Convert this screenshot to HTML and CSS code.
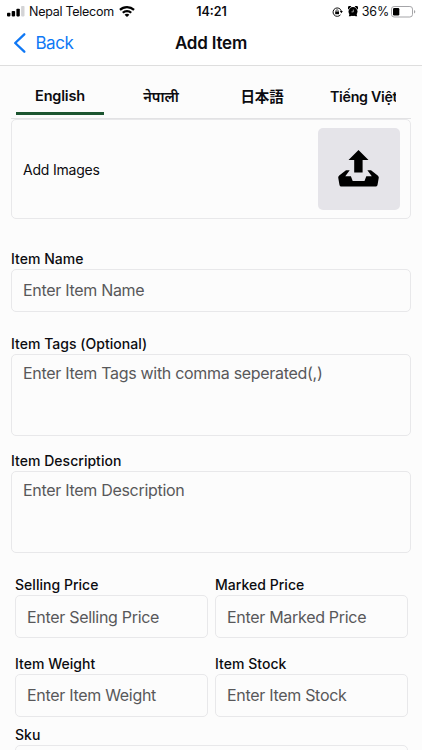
FILE: index.html
```html
<!DOCTYPE html>
<html lang="en">
<head>
<meta charset="utf-8">
<title>Add Item</title>
<link rel="stylesheet" href="styles.css">
</head>
<body>
<div class="screen">
  <header>
    <div class="status">
      <div class="status-left">
        <svg class="signal" width="18" height="11" viewBox="0 0 18 11"><rect x="0" y="6.8" width="3.4" height="3.6" rx=".8"/><rect x="4.7" y="5" width="3.4" height="5.4" rx=".8"/><rect x="9.4" y="2.7" width="3.4" height="7.7" rx=".8"/><rect x="14.1" y="0" width="3.4" height="10.4" rx=".8" fill="#d4d4d6"/></svg>
        <span class="carrier">Nepal Telecom</span>
        <svg class="wifi" width="16" height="12" viewBox="0 0 16 12"><path d="M8 0C4.9 0 2.2 1.2.2 3.1l1.5 1.6a9.1 9.1 0 0 1 12.6 0l1.5-1.6A11.3 11.3 0 0 0 8 0zM8 4a7.2 7.2 0 0 0-5 2l1.6 1.6a4.9 4.9 0 0 1 6.8 0L13 6a7.2 7.2 0 0 0-5-2zM8 7.8c-.9 0-1.8.3-2.4.9L8 11.1l2.4-2.4A3.5 3.5 0 0 0 8 7.8z"/></svg>
      </div>
      <span class="clock">14:21</span>
      <div class="status-right">
        <svg class="lock" width="11" height="10" viewBox="0 0 11 10"><path d="M9.300 4A4.200 4.200 0 1 0 8.500 7.800" fill="none" stroke="#111" stroke-width="1"/><path d="M7.800 4h3L9.400 6.200z"/><path d="M3.200 4.500h3.800v2.700H3.200z"/><path d="M4 4.700V3.800a1.100 1.100 0 0 1 2.200 0v.9" fill="none" stroke="#111" stroke-width=".7"/></svg>
        <svg class="alarm" width="10" height="11" viewBox="0 0 10 11"><circle cx="5" cy="5.600" r="4.500"/><path d="M.3 3.500A2 2 0 0 1 3.300.5zM9.700 3.500A2 2 0 0 0 6.700.5zM1.500 8 .8 10.300h1.700l1.500-1zM8.500 8l.7 2.300H7.500l-1.500-1z"/><path d="M5.300 3.600v2.300H3.500" fill="none" stroke="#ddd" stroke-width=".7"/></svg>
        <span class="percent">36%</span>
        <svg class="battery" width="25" height="12" viewBox="0 0 25 12"><rect x=".5" y=".5" width="21" height="10.500" rx="2.600" fill="none" stroke="#a5a5a8"/><rect x="2" y="2" width="6.300" height="7.500" rx="1.200"/><path d="M23 4v3.500c1.800-.6 1.800-2.900 0-3.500z" fill="#a5a5a8"/></svg>
      </div>
    </div>
    <nav class="nav">
      <div class="back"><svg width="13" height="20" viewBox="0 0 13 20"><path d="M11.300 1.300 2.200 10l9.100 8.700" fill="none" stroke="#0f78f5" stroke-width="2.300" stroke-linecap="round" stroke-linejoin="round"/></svg><span>Back</span></div>
      <h1>Add Item</h1>
    </nav>
  </header>
  <main>
    <div class="tabs">
      <div class="tab active">English</div>
      <div class="tab native" lang="ne">नेपाली</div>
      <div class="tab native" lang="ja">日本語</div>
      <div class="tab native last" lang="vi">Tiếng Việt</div>
    </div>
    <section class="images">
      <span>Add Images</span>
      <div class="upload"><svg width="42" height="38" viewBox="0 0 42 38"><path d="M20.500 0 10.500 10h5.700v12.500h8.400V10h5.900z"/><path d="M8 20.300h3.700L7.300 26.300h5.600l1.800 4.700h11.800l1.800-4.700h5.500l-4.400-6H33l6.700 5.100c.7.500 1 1.300 1.100 2.200l-1.200 6.800c-.2 1.400-1 2-2.200 2H3.500c-1.200 0-1.900-.6-2.100-2L.2 27.600c0-.9.300-1.700 1-2.200z"/></svg></div>
    </section>
    <div class="field name"><label>Item Name</label><div class="input"><span>Enter Item Name</span></div></div>
    <div class="field tags"><label>Item Tags (Optional)</label><div class="input area"><span>Enter Item Tags with comma seperated(,)</span></div></div>
    <div class="field description"><label>Item Description</label><div class="input area"><span>Enter Item Description</span></div></div>
    <div class="pairs">
      <div class="field"><label>Selling Price</label><div class="input"><span>Enter Selling Price</span></div></div>
      <div class="field"><label>Marked Price</label><div class="input"><span>Enter Marked Price</span></div></div>
      <div class="field"><label>Item Weight</label><div class="input"><span>Enter Item Weight</span></div></div>
      <div class="field"><label>Item Stock</label><div class="input"><span>Enter Item Stock</span></div></div>
    </div>
    <div class="field sku"><label>Sku</label><div class="input"></div></div>
  </main>
</div>
</body>
</html>
```
FILE: styles.css
```css
* { box-sizing: border-box; }
body { margin: 0; font-family: Inter, "Noto Sans", "Noto Sans CJK JP", sans-serif; color: #0c0c10; }
.screen { width: 422px; height: 750px; overflow: hidden; background: #fcfcfc; }
header { height: 66px; background: #fff; border-bottom: 1px solid #dedede; }
svg { display: block; flex: none; }
.status { display: grid; grid-template-columns: 1fr auto 1fr; height: 22px; padding: 0 6px 0 7px; align-items: center; font-size: 12.5px; line-height: 22px; }
.status-left, .status-right { display: flex; align-items: center; }
.status-right { justify-content: flex-end; }
.signal { margin-top: -1px; }
.carrier { margin: 0 5px 0 4px; white-space: nowrap; letter-spacing: -.27px; padding-top: 1px; }
.clock { font-weight: 600; font-size: 12.5px; padding-top: 1px; }
.alarm { margin: 0 4px 0 5px; }
.percent { margin-right: 2px; letter-spacing: -.15px; padding-top: 1px; }
.nav { display: grid; grid-template-columns: 1fr auto 1fr; height: 43px; padding: 0 13px 1px; align-items: center; }
.back { display: flex; align-items: center; gap: 9.5px; color: #0f78f5; font-size: 17px; letter-spacing: -.5px; }
h1 { margin: 0; font-size: 17px; font-weight: 600; letter-spacing: -.2px; }
main { padding: 0 11px; }
.tabs { display: flex; height: 53px; border-bottom: 1px solid #e2e2e4; padding-left: 5px; padding-right: 15px; overflow: hidden; }
.tab { flex: none; width: 88px; margin-right: 13px; height: 49px; padding-top: 19px; text-align: center; font-size: 14.5px; line-height: 22px; font-weight: 600; letter-spacing: -.2px; white-space: nowrap; }
.native { padding-top: 20px; letter-spacing: -.1px; }
.active { border-bottom: 3px solid #1c5530; }
.tab.last { flex: 1; width: auto; min-width: 0; overflow: hidden; margin-right: 0; text-align: left; padding-left: 11px; font-size: 14.25px; letter-spacing: -.3px; }
.images { display: flex; align-items: center; justify-content: space-between; height: 100px; border: 1px solid #e8e8ea; border-radius: 5px; padding: 0 10.5px 0 11px; font-size: 14px; letter-spacing: -.2px; }
.upload { width: 82px; height: 82px; border-radius: 5px; background: #e5e4e9; display: flex; align-items: center; justify-content: center; }
.field label { display: block; height: 20px; line-height: 20px; font-size: 14px; font-weight: 500; white-space: nowrap; letter-spacing: .03px; }
.input { height: 43px; border: 1px solid #e8e8ea; border-radius: 5px; padding: 0 11px; display: flex; align-items: center; font-size: 16px; line-height: 24px; letter-spacing: -.3px; color: #58585a; white-space: nowrap; }
.area { height: 82px; align-items: flex-start; padding-top: 6px; }
.name { margin-top: 29.5px; }
.tags { margin-top: 22.5px; }
.description { margin-top: 15px; }
.pairs { display: grid; grid-template-columns: 193px 193px; column-gap: 7px; row-gap: 15.500px; margin: 22.400px 0 8px 4px; }
.sku { margin: 0 3px 0 4px; }
```
